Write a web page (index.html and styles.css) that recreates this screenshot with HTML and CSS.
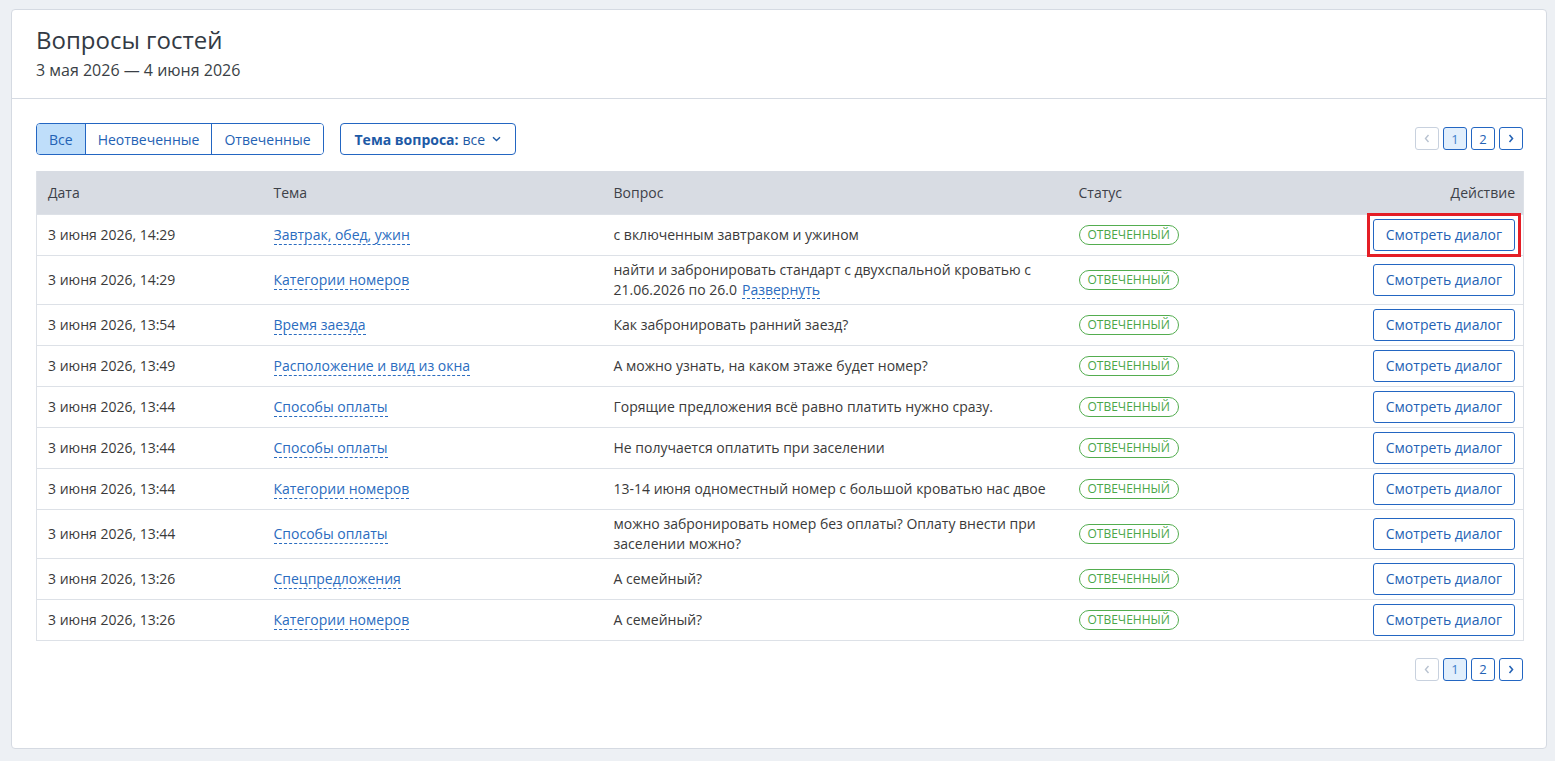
FILE: index.html
```html
<!DOCTYPE html>
<html lang="ru">
<head>
  <meta charset="UTF-8" />
  <meta name="viewport" content="width=device-width, initial-scale=1.0" />
  <title>Вопросы гостей</title>
  <link rel="stylesheet" href="styles.css">
</head>
<body>
  <div class="card">
    <div class="card-header">
      <h1>Вопросы гостей</h1>
      <div class="period">3 мая 2026 — 4 июня 2026</div>
    </div>

    <div class="card-body">
      <div class="toolbar">
        <div class="filters">
          <div class="segmented">
            <button class="active">Все</button>
            <button>Неотвеченные</button>
            <button>Отвеченные</button>
          </div>
          <button class="dropdown"><b>Тема вопроса:</b> все
            <svg width="9" height="6" viewBox="0 0 9 6"><path d="M1 1.2l3.5 3.3L8 1.2" fill="none" stroke="currentColor" stroke-width="1.4"/></svg>
          </button>
        </div>
        <div class="pager">
          <button class="disabled"><svg width="6" height="9" viewBox="0 0 6 9"><path d="M4.5 1L1.5 4.5l3 3.5" fill="none" stroke="currentColor" stroke-width="1.4"/></svg></button>
          <button class="current">1</button>
          <button>2</button>
          <button><svg width="6" height="9" viewBox="0 0 6 9"><path d="M1.5 1l3 3.5-3 3.5" fill="none" stroke="currentColor" stroke-width="1.6"/></svg></button>
        </div>
      </div>

      <table class="questions">
        <thead>
          <tr>
            <th class="col-date">Дата</th>
            <th class="col-topic">Тема</th>
            <th class="col-question">Вопрос</th>
            <th class="col-status">Статус</th>
            <th class="col-action">Действие</th>
          </tr>
        </thead>
        <tbody id="rows"></tbody>
      </table>

      <div class="pager pager-bottom">
        <button class="disabled"><svg width="6" height="9" viewBox="0 0 6 9"><path d="M4.5 1L1.5 4.5l3 3.5" fill="none" stroke="currentColor" stroke-width="1.4"/></svg></button>
        <button class="current">1</button>
        <button>2</button>
        <button><svg width="6" height="9" viewBox="0 0 6 9"><path d="M1.5 1l3 3.5-3 3.5" fill="none" stroke="currentColor" stroke-width="1.6"/></svg></button>
      </div>
    </div>
  </div>

  <script>
    const questions = [
      ["3 июня 2026, 14:29", "Завтрак, обед, ужин", "с включенным завтраком и ужином"],
      ["3 июня 2026, 14:29", "Категории номеров", "найти и забронировать стандарт с двухспальной кроватью с 21.06.2026 по 26.0", true],
      ["3 июня 2026, 13:54", "Время заезда", "Как забронировать ранний заезд?"],
      ["3 июня 2026, 13:49", "Расположение и вид из окна", "А можно узнать, на каком этаже будет номер?"],
      ["3 июня 2026, 13:44", "Способы оплаты", "Горящие предложения всё равно платить нужно сразу."],
      ["3 июня 2026, 13:44", "Способы оплаты", "Не получается оплатить при заселении"],
      ["3 июня 2026, 13:44", "Категории номеров", "13-14 июня одноместный номер с большой кроватью нас двое"],
      ["3 июня 2026, 13:44", "Способы оплаты", "можно забронировать номер без оплаты? Оплату внести при заселении можно?"],
      ["3 июня 2026, 13:26", "Спецпредложения", "А семейный?"],
      ["3 июня 2026, 13:26", "Категории номеров", "А семейный?"]
    ];

    const tbody = document.getElementById("rows");
    questions.forEach((q, i) => {
      const tr = document.createElement("tr");
      const more = q[3] ? '<a class="dashed more">Развернуть</a>' : "";
      tr.innerHTML =
        '<td>' + q[0] + '</td>' +
        '<td><a class="dashed">' + q[1] + '</a></td>' +
        '<td class="question">' + q[2] + more + '</td>' +
        '<td><span class="badge">Отвеченный</span></td>' +
        '<td class="col-action"><button class="btn-dialog' + (i === 0 ? ' marked' : '') + '">Смотреть диалог</button></td>';
      tbody.appendChild(tr);
    });
  </script>
</body>
</html>
```

FILE: styles.css
```css
html, body { margin: 0; height: 100%; }
body { background: #edf0f4; font-family: "Open Sans", "Noto Sans", sans-serif; color: #3a3a3a; font-size: 14px; padding: 9px 8px 12px 11px; box-sizing: border-box; }
button { font-family: inherit; cursor: pointer; }

.card { background: #fff; border: 1px solid #d5dae2; border-radius: 4px; height: 100%; box-sizing: border-box; }
.card-header { padding: 14px 24px 17px 24px; border-bottom: 1px solid #d5dae2; }
.card-header h1 { margin: 0; font-size: 24px; line-height: 32px; font-weight: 400; color: #333a44; }
.period { margin-top: 3px; font-size: 16px; line-height: 22px; color: #3a3f46; }

.card-body { padding: 24px 22px 0 24px; }

.toolbar { display: flex; justify-content: space-between; align-items: flex-start; }
.filters { display: flex; gap: 16px; }
.segmented { display: flex; border: 1px solid #2366c2; border-radius: 4px; overflow: hidden; }
.segmented button { height: 30px; border: 0; border-left: 1px solid #2366c2; background: #fff; color: #2462b4; font-size: 14px; padding: 0 12px; }
.segmented button:first-child { border-left: 0; }
.segmented button.active { background: #bfdefa; }
.dropdown { height: 32px; border: 1px solid #2366c2; border-radius: 4px; background: #fff; color: #1d5aa6; font-size: 14px; padding: 0 14px; display: flex; align-items: center; gap: 4px; }
.dropdown b { font-weight: 700; }
.dropdown svg { margin-left: 3px; }

.pager { display: flex; gap: 4px; margin-top: 4px; margin-right: 1px; }
.pager button { width: 24px; height: 23px; padding: 0; border: 1px solid #2366c2; border-radius: 3px; background: #fff; color: #2462b4; font-size: 13px; display: flex; align-items: center; justify-content: center; }
.pager button.current { background: #e2effc; color: #3f7fcb; }
.pager button.disabled { border-color: #c8d1de; color: #b8c2d0; cursor: default; }
.pager-bottom { justify-content: flex-end; margin-top: 17px; }

.questions { width: 100%; margin-top: 16px; border-collapse: collapse; border: 1px solid #dde1e7; border-top: 0; table-layout: fixed; }
.questions th { background: #d8dce3; height: 43px; padding: 0 11px; text-align: left; font-weight: 400; color: #3d4148; box-sizing: border-box; }
.questions td { padding: 4px 11px; line-height: 20px; border-top: 1px solid #dde1e7; vertical-align: middle; }
.col-date { width: 226px; }
.col-topic { width: 340px; }
.col-question { width: 465px; }
.col-status { width: 200px; }
.questions .col-action { text-align: right; padding-right: 8px; }
.question { padding-right: 30px; }

.dashed { color: #2a6cc0; border-bottom: 1px dashed #2a6cc0; text-decoration: none; cursor: pointer; }
.more { display: inline-block; line-height: 17px; margin-left: 5px; }

.badge { display: inline-block; height: 18px; line-height: 18px; padding: 0 8px; border: 1px solid #53ad4f; border-radius: 10px; color: #4aa648; font-size: 12px; text-transform: uppercase; }

.btn-dialog { position: relative; height: 32px; padding: 0 12px; border: 1px solid #2366c2; border-radius: 3px; background: #fff; color: #2462b4; font-size: 14px; vertical-align: middle; }
.btn-dialog.marked::after { content: ""; position: absolute; left: -7px; right: -7px; top: -7px; bottom: -7px; border: 3px solid #e41e26; }
```
